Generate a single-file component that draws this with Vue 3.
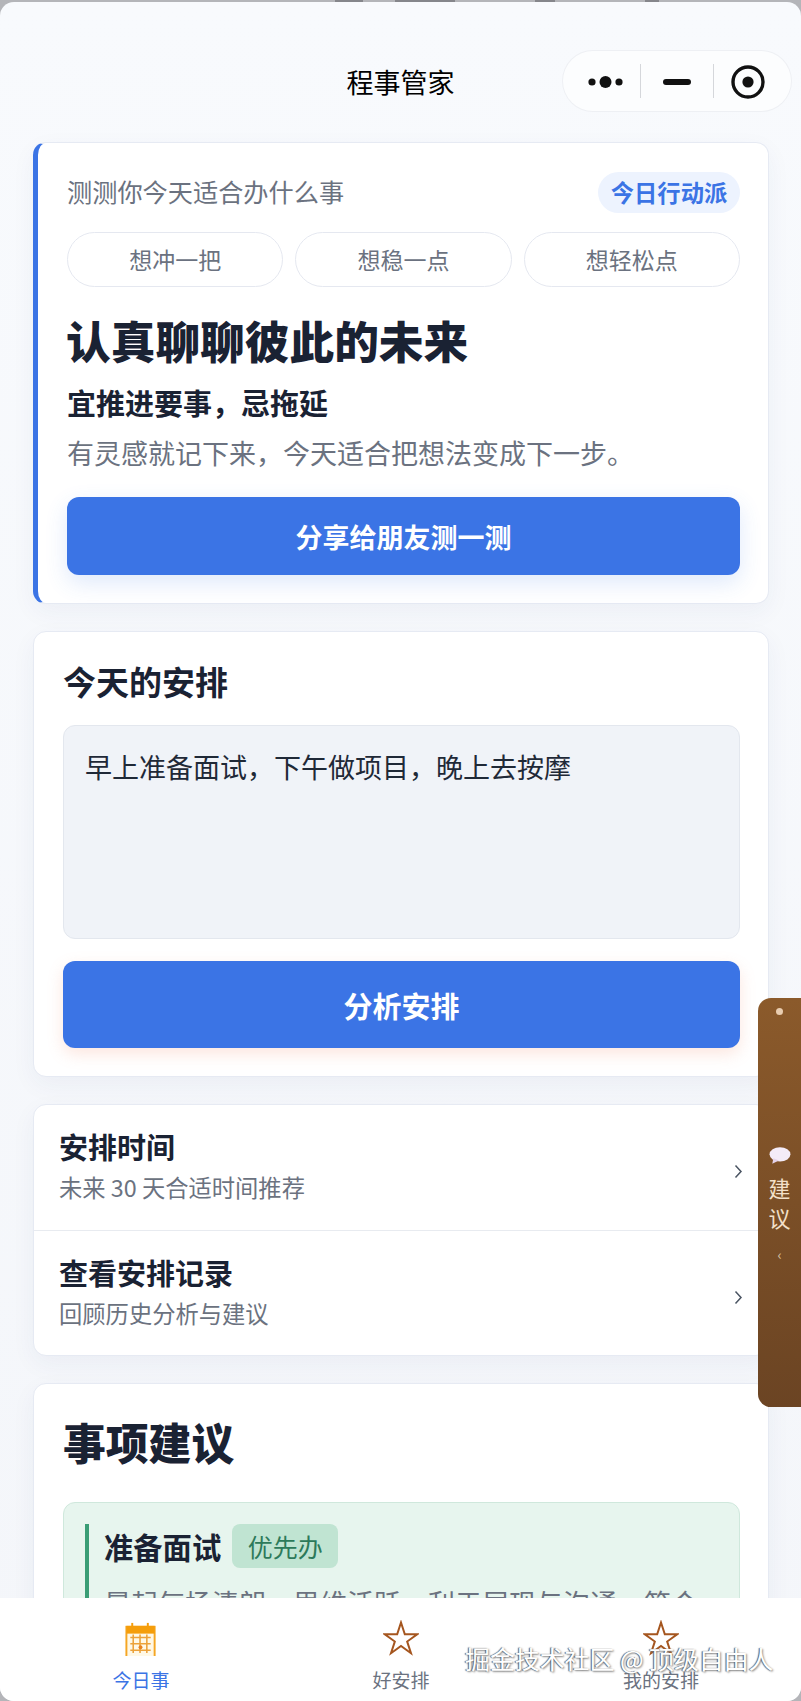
<script setup>
const moods = ['想冲一把', '想稳一点', '想轻松点']
const links = [
  { title: '安排时间', sub: '未来 30 天合适时间推荐' },
  { title: '查看安排记录', sub: '回顾历史分析与建议' }
]
</script>

<template>
  <div class="shell">
    <div class="peek">
      <i class="blot b1"></i><i class="blot b2"></i><i class="blot b3"></i><i class="blot b4"></i>
    </div>
    <div class="page">
      <header class="nav">
        <span class="nav-title">程事管家</span>
        <div class="capsule">
          <svg width="228" height="61" viewBox="0 0 228 61">
            <circle cx="29" cy="32" r="3.6" fill="#111" />
            <circle cx="42.5" cy="32" r="6" fill="#111" />
            <circle cx="56" cy="32" r="3.6" fill="#111" />
            <rect x="77" y="14" width="1" height="34" fill="#d5d7db" />
            <rect x="100" y="29" width="28" height="6" rx="3" fill="#111" />
            <rect x="150" y="14" width="1" height="34" fill="#d5d7db" />
            <circle cx="185" cy="32" r="15" fill="none" stroke="#111" stroke-width="3.4" />
            <circle cx="185" cy="32" r="5.6" fill="#111" />
          </svg>
        </div>
      </header>

      <section class="card mood-card">
        <div class="mood-head">
          <span class="mood-q">测测你今天适合办什么事</span>
          <span class="badge">今日行动派</span>
        </div>
        <div class="mood-row">
          <div v-for="m in moods" :key="m" class="mood-btn">{{ m }}</div>
        </div>
        <h1 class="headline">认真聊聊彼此的未来</h1>
        <p class="advice">宜推进要事，忌拖延</p>
        <p class="note">有灵感就记下来，今天适合把想法变成下一步。</p>
        <div class="btn share">分享给朋友测一测</div>
      </section>

      <section class="card plan-card">
        <h2 class="plan-title">今天的安排</h2>
        <div class="plan-input">早上准备面试，下午做项目，晚上去按摩</div>
        <div class="btn analyze">分析安排</div>
      </section>

      <section class="card list-card">
        <div v-for="l in links" :key="l.title" class="link-row">
          <div>
            <div class="link-title">{{ l.title }}</div>
            <div class="link-sub">{{ l.sub }}</div>
          </div>
          <svg class="chev" width="9" height="15" viewBox="0 0 9 15">
            <path d="M1.5 1.5 L7 7.5 L1.5 13.5" fill="none" stroke="#4b5563" stroke-width="1.5" />
          </svg>
        </div>
      </section>

      <section class="card tips-card">
        <h2 class="tips-title">事项建议</h2>
        <div class="tip">
          <div class="tip-inner">
            <div class="tip-head">
              <span class="tip-name">准备面试</span>
              <span class="tip-tag">优先办</span>
            </div>
            <p class="tip-text">晨起气场清朗，思维活跃，利于展现与沟通，答合</p>
          </div>
        </div>
      </section>

      <aside class="side-tab">
        <i class="side-dot"></i>
        <svg class="side-bubble" width="22" height="18" viewBox="0 0 20 16">
          <ellipse cx="10" cy="6.5" rx="9.5" ry="6.5" fill="#f4ecf8" />
          <path d="M4 10 L3 15 L9 12 Z" fill="#e4d3ea" />
        </svg>
        <span class="side-txt">建</span>
        <span class="side-txt">议</span>
        <span class="side-arrow">‹</span>
      </aside>

      <nav class="tabbar">
        <div class="tab active">
          <svg width="32" height="36" viewBox="0 -2 32 37">
            <rect x="1" y="5" width="29" height="31" fill="#fff8e6" stroke="#f5a623" stroke-width="2" />
            <rect x="1" y="4" width="29" height="8" fill="#f59e0b" />
            <rect x="6" y="1" width="2" height="4" fill="#f59e0b" />
            <rect x="22" y="1" width="2" height="4" fill="#f59e0b" />
            <path d="M5 16 H26 M5 22.5 H26 M5 29 H26 M8 13 V32 M15 13 V32 M22 13 V32" stroke="#eca23a" stroke-width="1.6" fill="none" />
            <circle cx="15.5" cy="26" r="2" fill="#e8821e" />
          </svg>
          <span>今日事</span>
        </div>
        <div class="tab">
          <svg width="36" height="34" viewBox="0 0 36 34">
            <polygon points="18,1.5 21.82,13.24 34.17,13.25 24.18,20.51 27.99,32.25 18,25 8.01,32.25 11.82,20.51 1.83,13.25 14.18,13.24" fill="none" stroke="#a5561f" stroke-width="2" />
          </svg>
          <span>好安排</span>
        </div>
        <div class="tab">
          <svg width="36" height="34" viewBox="0 0 36 34">
            <polygon points="18,1.5 21.82,13.24 34.17,13.25 24.18,20.51 27.99,32.25 18,25 8.01,32.25 11.82,20.51 1.83,13.25 14.18,13.24" fill="none" stroke="#a5561f" stroke-width="2" />
          </svg>
          <span>我的安排</span>
        </div>
      </nav>

      <div class="watermark">掘金技术社区 @ 顶级自由人</div>
    </div>
  </div>
</template>

<style scoped>
.shell {
  position: relative;
  width: 801px;
  height: 1701px;
  background: #b4b5b9;
  overflow: hidden;
  font-family: "Noto Sans CJK SC", "Noto Sans", sans-serif;
  color: #1a2233;
}

.peek {
  position: absolute;
  inset: 0 0 auto 0;
  height: 3px;
}

.blot {
  position: absolute;
  top: 0;
  height: 2px;
  background: #85868b;
}

.b1 { left: 335px; width: 28px; }
.b2 { left: 395px; width: 60px; }
.b3 { left: 535px; width: 20px; }
.b4 { left: 645px; width: 14px; }

.page {
  position: relative;
  height: 1699px;
  margin-top: 2px;
  border-radius: 14px;
  background: linear-gradient(#f8fafd, #f4f6fa);
  overflow: hidden;
}

.nav {
  height: 140px;
  padding-top: 19px;
  box-sizing: border-box;
  display: flex;
  align-items: center;
  justify-content: center;
}

.nav-title {
  font-size: 27px;
  color: #000;
}

.capsule {
  position: absolute;
  left: 563px;
  top: 49px;
  width: 228px;
  height: 60px;
  border-radius: 31px;
  background: #fcfdfe;
  box-shadow: 0 0 0 1px #eef0f4;
}

.capsule svg {
  display: block;
  margin-top: -1px;
}

.card {
  margin: 0 32px 27px 33px;
  background: #fff;
  border: 1px solid #e6eaf3;
  border-radius: 13px;
  box-shadow: 0 8px 24px rgba(40, 60, 110, 0.05);
}

.mood-card {
  padding: 29px 28px 28px 29px;
  border-left: 5px solid #3b74e5;
}

.mood-head {
  display: flex;
  align-items: center;
  justify-content: space-between;
}

.mood-q {
  margin-bottom: 3px;
  font-size: 25.2px;
  color: #6b7280;
}

.badge {
  width: 142px;
  height: 41px;
  line-height: 41px;
  text-align: center;
  border-radius: 21px;
  background: #edf3fe;
  color: #3b74e5;
  font-size: 23.3px;
  font-weight: 700;
}

.mood-row {
  display: grid;
  grid-template-columns: repeat(3, 1fr);
  gap: 12px;
  margin-top: 19px;
}

.mood-btn {
  height: 55px;
  line-height: 53px;
  box-sizing: border-box;
  text-align: center;
  border: 1px solid #e5e8f0;
  border-radius: 28px;
  font-size: 23px;
  color: #6b7280;
}

.headline {
  margin: 24px 0 0 -1px;
  font-size: 44.7px;
  line-height: 58px;
  font-weight: 900;
  color: #1a2233;
}

.advice {
  margin: 13px 0 0;
  font-size: 29px;
  line-height: 40px;
  font-weight: 700;
}

.note {
  margin: 12px 0 0;
  font-size: 27px;
  line-height: 38px;
  color: #6b7280;
  white-space: nowrap;
}

.btn {
  display: flex;
  align-items: center;
  justify-content: center;
  background: #3b74e5;
  border-radius: 12px;
  color: #fff;
  font-weight: 700;
}

.share {
  height: 78px;
  margin-top: 25px;
  font-size: 27px;
  box-shadow: 0 8px 22px rgba(59, 116, 229, 0.16);
}

.plan-card {
  padding: 27px 28px 28px 29px;
}

.plan-title {
  margin: 0;
  font-size: 33px;
  line-height: 44px;
  font-weight: 700;
}

.plan-input {
  height: 214px;
  box-sizing: border-box;
  margin-top: 22px;
  padding: 21px 21px;
  background: #f0f3f8;
  border: 1px solid #e3e7ee;
  border-radius: 12px;
  font-size: 27px;
  line-height: 40px;
  color: #1f2937;
}

.analyze {
  height: 87px;
  margin-top: 22px;
  font-size: 29px;
  box-shadow: 0 6px 16px rgba(240, 140, 110, 0.22);
}

.list-card {
  overflow: hidden;
}

.link-row {
  height: 125px;
  box-sizing: border-box;
  padding: 0 25px 6px;
  display: flex;
  align-items: center;
  justify-content: space-between;
}

.link-row + .link-row {
  padding-bottom: 4px;
  border-top: 1px solid #e8ebf0;
}

.link-title {
  font-size: 29px;
  line-height: 40px;
  font-weight: 700;
}

.link-sub {
  margin-top: 4px;
  font-size: 23.3px;
  line-height: 34px;
  color: #6b7280;
}

.chev {
  margin-top: 13px;
}

.tips-card {
  margin-bottom: 0;
  padding: 27px 28px 0 29px;
}

.tips-title {
  margin: 0;
  font-size: 42.8px;
  line-height: 60px;
  font-weight: 900;
}

.tip {
  margin-top: 31px;
  padding: 21px;
  background: #e7f5ee;
  border: 1px solid #cfe8dc;
  border-radius: 12px;
}

.tip-inner {
  padding-left: 15px;
  border-left: 4px solid #3a9d75;
}

.tip-head {
  display: flex;
  align-items: center;
  gap: 11px;
}

.tip-name {
  font-size: 29.3px;
  font-weight: 700;
}

.tip-tag {
  width: 106px;
  height: 44px;
  line-height: 44px;
  text-align: center;
  background: #c0e4d2;
  border-radius: 8px;
  font-size: 25px;
  color: #2d7a5a;
}

.tip-text {
  margin: 15px 0 0;
  font-size: 27px;
  line-height: 40px;
  color: #6b7280;
  white-space: nowrap;
  overflow: hidden;
}

.side-tab {
  position: absolute;
  left: 758px;
  top: 996px;
  width: 43px;
  height: 409px;
  border-radius: 13px 0 0 13px;
  background: linear-gradient(#8b5a2b, #6b4423);
  display: flex;
  flex-direction: column;
  align-items: center;
  color: #f3e0c9;
}

.side-dot {
  width: 7px;
  height: 7px;
  margin-top: 10px;
  border-radius: 50%;
  background: #e9cdb0;
}

.side-bubble {
  margin-top: 132px;
}

.side-txt {
  font-size: 22px;
  line-height: 30px;
}

.side-txt:first-of-type {
  margin-top: 7px;
}

.side-arrow {
  margin-top: 12px;
  font-size: 14px;
  line-height: 20px;
  opacity: 0.8;
}

.tabbar {
  position: absolute;
  left: 0;
  right: 0;
  bottom: 0;
  height: 103px;
  padding: 0 12px 0 11px;
  background: #fff;
  display: grid;
  grid-template-columns: repeat(3, 260px);
}

.tab {
  display: flex;
  flex-direction: column;
  align-items: center;
  padding-top: 22px;
  font-size: 19px;
  color: #6b7280;
}

.tab svg {
  height: 36px;
  display: block;
}

.tab span {
  margin-top: 10px;
  line-height: 28px;
}

.tab.active {
  color: #3b74e5;
}

.watermark {
  position: absolute;
  left: 465px;
  top: 1639px;
  font-size: 24.9px;
  line-height: 34px;
  white-space: nowrap;
  color: #fff;
  text-shadow: -1px 0 1px #555, 1px 1px 2px #888;
}
</style>
